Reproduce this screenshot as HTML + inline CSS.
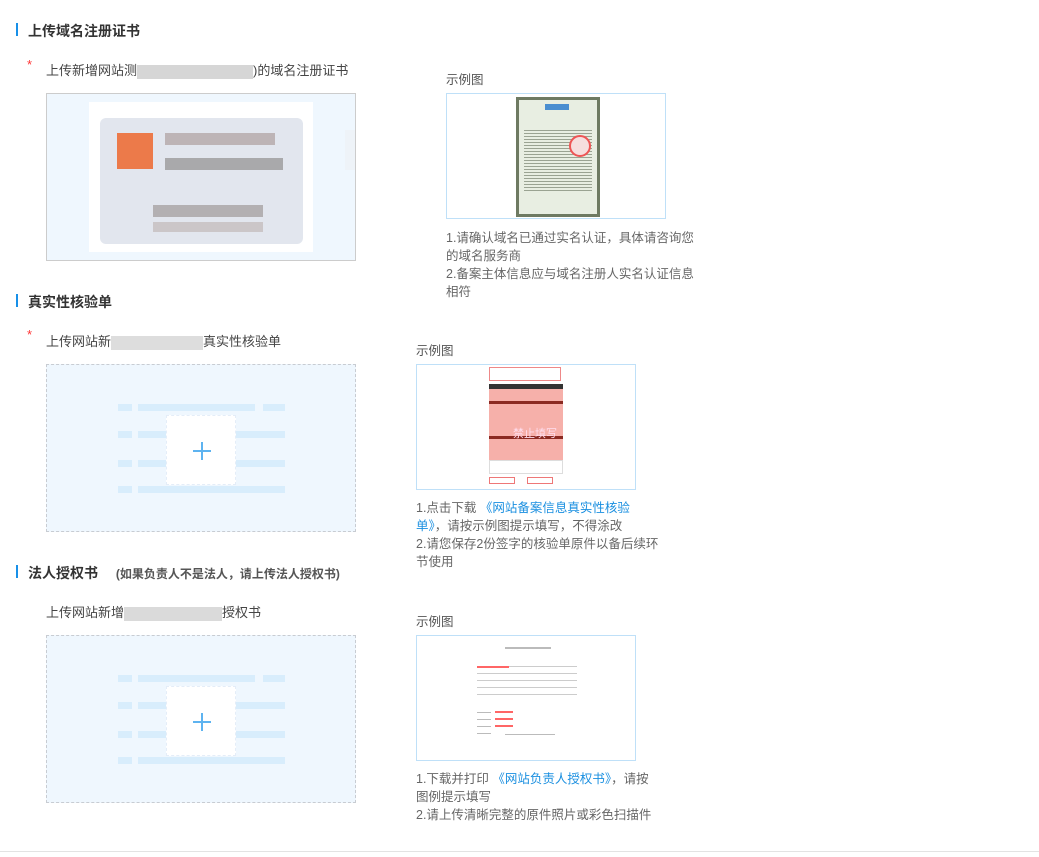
<!DOCTYPE html>
<html><head><meta charset="utf-8">
<style>
*{margin:0;padding:0;box-sizing:border-box}
body{width:1039px;height:857px;background:#fff;position:relative;overflow:hidden;font-family:"Liberation Sans","Noto Sans CJK SC",sans-serif;color:#555;font-size:13px}
.a{position:absolute}
.bar{position:absolute;width:2px;height:13px;background:#1890e8}
.t{position:absolute;font-size:14px;font-weight:bold;color:#333;white-space:nowrap}
.lbl{position:absolute;font-size:13px;color:#444;white-space:nowrap}
.star{position:absolute;color:#f33;font-size:13px}
.blur{display:inline-block;background:#d6d6d6;height:14px;vertical-align:middle}
.up{position:absolute;width:310px;height:168px;background:#eff7fe;border:1px dashed #c8ccd2}
.ln{position:absolute;background:#d8edfc;height:7px}
.pl{position:absolute;width:70px;height:70px;background:#fff;border:1px dashed #e4edf8}
.pl:before{content:"";position:absolute;left:26px;top:34px;width:18px;height:2px;background:#5db3f0}
.pl:after{content:"";position:absolute;left:34px;top:26px;width:2px;height:18px;background:#5db3f0}
.ex{position:absolute;font-size:12.5px;color:#555}
.img{position:absolute;width:220px;border:1px solid #bfe0f8;background:#fff}
.tx{position:absolute;font-size:12.5px;color:#666;line-height:18px}
.lk{color:#1a8fe0}
</style></head><body>

<div class="bar" style="left:16px;top:23px"></div>
<div class="t" style="left:28px;top:21px">上传域名注册证书</div>
<div class="star" style="left:27px;top:57px">*</div>
<div class="lbl" style="left:46px;top:60px">上传新增网站测<span class="blur" style="width:116px"></span>)的域名注册证书</div>
<div class="a" style="left:46px;top:93px;width:310px;height:168px;background:#eff7fe;border:1px solid #ccc"></div>
<div class="a" style="left:89px;top:102px;width:224px;height:150px;background:#fff"></div>
<div class="a" style="left:100px;top:118px;width:203px;height:126px;background:#e2e6ee;border-radius:6px"></div>
<div class="a" style="left:117px;top:133px;width:36px;height:36px;background:#ec7a4a"></div>
<div class="a" style="left:165px;top:133px;width:110px;height:12px;background:#bdb4b6"></div>
<div class="a" style="left:165px;top:158px;width:118px;height:12px;background:#a9a9ab"></div>
<div class="a" style="left:153px;top:205px;width:110px;height:12px;background:#b3b0b2"></div>
<div class="a" style="left:153px;top:222px;width:110px;height:10px;background:#cbc6c8"></div>
<div class="a" style="left:345px;top:130px;width:10px;height:40px;background:#eef3f8"></div>

<div class="ex" style="left:446px;top:69px">示例图</div>
<div class="img" style="left:446px;top:93px;height:126px">
<div class="a" style="left:69px;top:3px;width:84px;height:120px;background:#6e7a62"></div>
<div class="a" style="left:72px;top:6px;width:78px;height:114px;background:#e8eee2"></div>
<div class="a" style="left:98px;top:10px;width:24px;height:6px;background:#4a8ed0"></div>
<div class="a" style="left:77px;top:34px;width:68px;height:64px;background:repeating-linear-gradient(#e8eee2 0 2px,#9aa392 2px 3px)"></div>
<div class="a" style="left:122px;top:41px;width:22px;height:22px;border:2px solid #e55;border-radius:50%;background:#f6dede"></div>
</div>
<div class="tx" style="left:446px;top:229px;width:250px">1.请确认域名已通过实名认证，具体请咨询您的域名服务商<br>2.备案主体信息应与域名注册人实名认证信息相符</div>

<div class="bar" style="left:16px;top:294px"></div>
<div class="t" style="left:28px;top:292px">真实性核验单</div>
<div class="star" style="left:27px;top:327px">*</div>
<div class="lbl" style="left:46px;top:331px">上传网站新<span class="blur" style="width:92px;background:#ddd"></span>真实性核验单</div>
<div class="up" style="left:46px;top:364px">
<div class="ln" style="left:71px;top:39px;width:14px"></div><div class="ln" style="left:91px;top:39px;width:117px"></div><div class="ln" style="left:216px;top:39px;width:22px"></div>
<div class="ln" style="left:71px;top:66px;width:14px"></div><div class="ln" style="left:91px;top:66px;width:147px"></div>
<div class="ln" style="left:71px;top:95px;width:14px"></div><div class="ln" style="left:91px;top:95px;width:147px"></div>
<div class="ln" style="left:71px;top:121px;width:14px"></div><div class="ln" style="left:91px;top:121px;width:147px"></div>
<div class="pl" style="left:119px;top:50px"></div>
</div>

<div class="ex" style="left:416px;top:340px">示例图</div>
<div class="img" style="left:416px;top:364px;height:126px">
<div class="a" style="left:72px;top:2px;width:72px;height:14px;border:1px solid #e88;background:#fff"></div>
<div class="a" style="left:72px;top:19px;width:74px;height:5px;background:#333"></div>
<div class="a" style="left:72px;top:24px;width:74px;height:85px;background:#f6b0aa"></div>
<div class="a" style="left:72px;top:36px;width:74px;height:3px;background:#8b2a22"></div>
<div class="a" style="left:72px;top:71px;width:74px;height:3px;background:#8b2a22"></div>
<div class="a" style="left:72px;top:95px;width:74px;height:14px;background:#fff;border:1px solid #ddd"></div>
<div class="a" style="left:72px;top:112px;width:26px;height:7px;border:1px solid #e77"></div>
<div class="a" style="left:110px;top:112px;width:26px;height:7px;border:1px solid #e77"></div>
<div class="a" style="left:96px;top:60px;font-size:11px;color:#fde">禁止填写</div>
</div>
<div class="tx" style="left:416px;top:499px;width:243px">1.点击下载 <span class="lk">《网站备案信息真实性核验<br>单》</span>，请按示例图提示填写，不得涂改<br>2.请您保存2份签字的核验单原件以备后续环<br>节使用</div>

<div class="bar" style="left:16px;top:565px"></div>
<div class="t" style="left:28px;top:563px">法人授权书 <span style="font-size:12px;color:#555;margin-left:14px">(如果负责人不是法人，请上传法人授权书)</span></div>
<div class="lbl" style="left:46px;top:602px">上传网站新增<span class="blur" style="width:98px;background:#dadada"></span>授权书</div>
<div class="up" style="left:46px;top:635px">
<div class="ln" style="left:71px;top:39px;width:14px"></div><div class="ln" style="left:91px;top:39px;width:117px"></div><div class="ln" style="left:216px;top:39px;width:22px"></div>
<div class="ln" style="left:71px;top:66px;width:14px"></div><div class="ln" style="left:91px;top:66px;width:147px"></div>
<div class="ln" style="left:71px;top:95px;width:14px"></div><div class="ln" style="left:91px;top:95px;width:147px"></div>
<div class="ln" style="left:71px;top:121px;width:14px"></div><div class="ln" style="left:91px;top:121px;width:147px"></div>
<div class="pl" style="left:119px;top:50px"></div>
</div>

<div class="ex" style="left:416px;top:611px">示例图</div>
<div class="img" style="left:416px;top:635px;height:126px">
<div class="a" style="left:88px;top:11px;width:46px;height:2px;background:#bbb"></div>
<div class="a" style="left:60px;top:25px;width:100px;height:36px;background:repeating-linear-gradient(#fff 0 5px,#ccc 5px 6px,#fff 6px 7px)"></div>
<div class="a" style="left:60px;top:30px;width:32px;height:2px;background:#f66"></div>
<div class="a" style="left:78px;top:75px;width:18px;height:2px;background:#f66"></div>
<div class="a" style="left:78px;top:82px;width:18px;height:2px;background:#f66"></div>
<div class="a" style="left:78px;top:89px;width:18px;height:2px;background:#f66"></div>
<div class="a" style="left:60px;top:75px;width:14px;height:24px;background:repeating-linear-gradient(#fff 0 1px,#bbb 1px 2px,#fff 2px 7px)"></div>
<div class="a" style="left:88px;top:98px;width:50px;height:1px;background:#bbb"></div>
</div>
<div class="tx" style="left:416px;top:770px;width:250px">1.下载并打印 <span class="lk">《网站负责人授权书》</span>，请按<br>图例提示填写<br>2.请上传清晰完整的原件照片或彩色扫描件</div>

<div class="a" style="left:0;top:851px;width:1039px;height:1px;background:#e3e3e3"></div>
</body></html>
